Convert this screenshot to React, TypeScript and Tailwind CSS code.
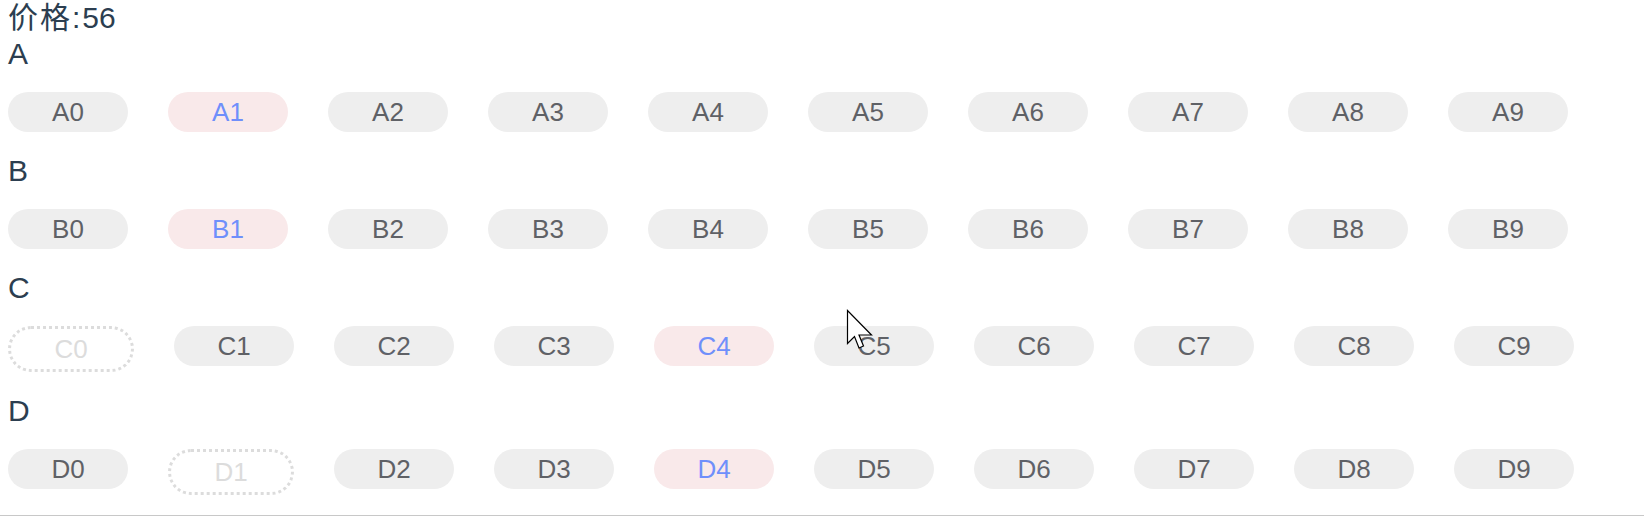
type Sku = { name: string; active?: boolean; disabled?: boolean }

const groups: { title: string; items: Sku[] }[] = [
  {
    title: "A",
    items: Array.from({ length: 10 }, (_, i) => ({ name: `A${i}`, active: i === 1 })),
  },
  {
    title: "B",
    items: Array.from({ length: 10 }, (_, i) => ({ name: `B${i}`, active: i === 1 })),
  },
  {
    title: "C",
    items: Array.from({ length: 10 }, (_, i) => ({ name: `C${i}`, active: i === 4, disabled: i === 0 })),
  },
  {
    title: "D",
    items: Array.from({ length: 10 }, (_, i) => ({ name: `D${i}`, active: i === 4, disabled: i === 1 })),
  },
]

function SkuButton({ item }: { item: Sku }) {
  if (item.disabled) {
    return (
      <div className="w-[126px] h-[46px] rounded-full border-[3px] border-dotted border-[#dcdcdc] text-center leading-[40px] text-[26px] text-[#dcdcdc]">
        {item.name}
      </div>
    )
  }
  if (item.active) {
    return (
      <div className="w-[120px] h-[40px] rounded-full bg-[#f9e9ea] text-center leading-[40px] text-[26px] text-[#6f8ffb]">
        {item.name}
      </div>
    )
  }
  return (
    <div className="w-[120px] h-[40px] rounded-full bg-[#eeeeee] text-center leading-[40px] text-[26px] text-[#5f6166]">
      {item.name}
    </div>
  )
}

export default function App() {
  return (
    <div
      className="relative w-full h-[516px] bg-white text-[#2c3e50] border-b border-[#c8c8c8]"
      style={{ fontFamily: '"Liberation Sans", Arial, "Noto Sans CJK SC", sans-serif' }}
    >
      <div className="pl-2 h-[35px] leading-[35px] text-[30px]">
        <span className="tracking-[2px]">价格:</span>56
      </div>

      {groups.map((g) => (
        <div key={g.title} className="pl-2 mb-[20px]">
          <div className="h-[37px] leading-[37px] text-[30px]">{g.title}</div>
          <div className="mt-[20px] flex items-start gap-[40px]">
            {g.items.map((item) => (
              <SkuButton key={item.name} item={item} />
            ))}
          </div>
        </div>
      ))}

      {/* mouse pointer captured in the screenshot */}
      <svg
        className="absolute left-[846px] top-[309px]"
        width="28"
        height="44"
        viewBox="0 0 28 44"
      >
        <path
          d="M1.5 1.5 L1.5 34.5 L8.5 27.5 L13 39 L17.5 37 L13 26 L25.5 26 Z"
          fill="#ffffff"
          stroke="#000000"
          strokeWidth="1.2"
          strokeLinejoin="miter"
        />
      </svg>
    </div>
  )
}
